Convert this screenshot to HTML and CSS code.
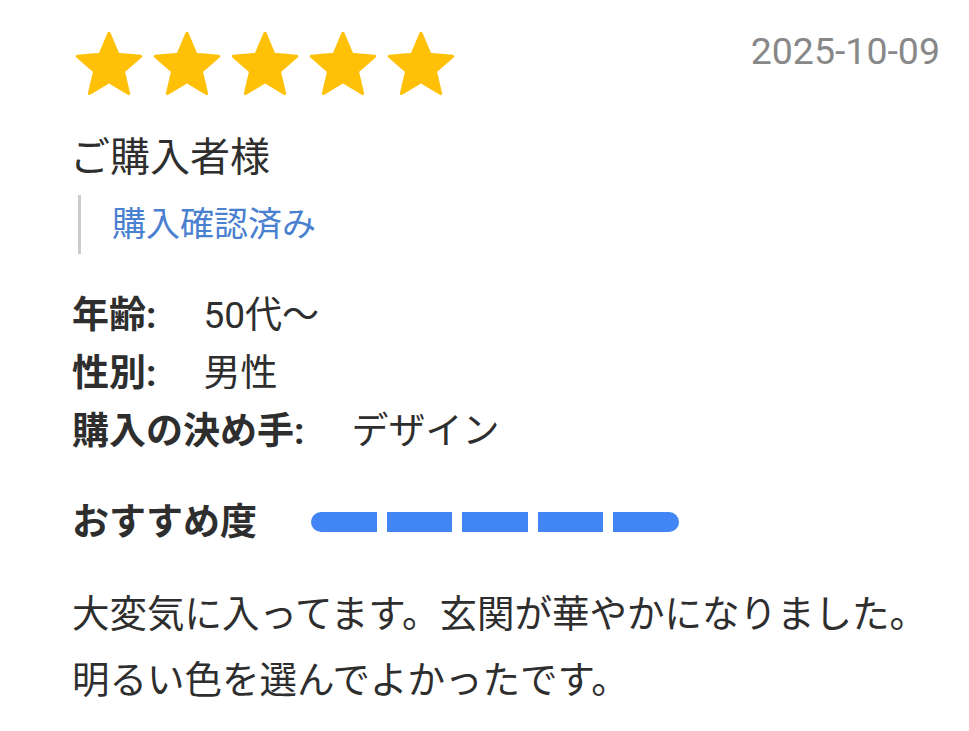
FILE: index.html
```html
<!DOCTYPE html>
<html lang="ja">
<head>
<meta charset="utf-8">
<link rel="stylesheet" href="styles.css">
</head>
<body>
<div class="review">
  <div class="header">
    <div class="stars">
      <svg class="star" viewBox="0 0 24 24"><path d="M12 17.27L18.18 21l-1.64-7.03L22 9.24l-7.19-.61L12 2 9.19 8.63 2 9.24l5.46 4.73L5.82 21z"/></svg>
      <svg class="star" viewBox="0 0 24 24"><path d="M12 17.27L18.18 21l-1.64-7.03L22 9.24l-7.19-.61L12 2 9.19 8.63 2 9.24l5.46 4.73L5.82 21z"/></svg>
      <svg class="star" viewBox="0 0 24 24"><path d="M12 17.27L18.18 21l-1.64-7.03L22 9.24l-7.19-.61L12 2 9.19 8.63 2 9.24l5.46 4.73L5.82 21z"/></svg>
      <svg class="star" viewBox="0 0 24 24"><path d="M12 17.27L18.18 21l-1.64-7.03L22 9.24l-7.19-.61L12 2 9.19 8.63 2 9.24l5.46 4.73L5.82 21z"/></svg>
      <svg class="star" viewBox="0 0 24 24"><path d="M12 17.27L18.18 21l-1.64-7.03L22 9.24l-7.19-.61L12 2 9.19 8.63 2 9.24l5.46 4.73L5.82 21z"/></svg>
    </div>
    <div class="date">2025-10-09</div>
  </div>
  <div class="name">ご購入者様</div>
  <div class="verified">購入確認済み</div>
  <div class="attrs">
    <div class="attr"><span class="label">年齢:</span><span class="value">50代〜</span></div>
    <div class="attr"><span class="label">性別:</span><span class="value">男性</span></div>
    <div class="attr"><span class="label">購入の決め手:</span><span class="value">デザイン</span></div>
  </div>
  <div class="recommend">
    <span class="rec-label">おすすめ度</span>
    <div class="bar">
      <span class="seg"></span><span class="seg"></span><span class="seg"></span><span class="seg"></span><span class="seg"></span>
    </div>
  </div>
  <p class="body">大変気に入ってます。玄関が華やかになりました。<br>明るい色を選んでよかったです。</p>
</div>
</body>
</html>
```

FILE: styles.css
```css
html, body {
  margin: 0;
  padding: 0;
  background: #fff;
}
body {
  font-family: Roboto, "Noto Sans CJK JP", sans-serif;
  color: #2e2e2e;
}
.review {
  padding: 27px 29px 0 72px;
}
.header {
  display: flex;
  justify-content: space-between;
  align-items: flex-start;
}
.stars {
  display: flex;
  gap: 2px;
  margin-left: -1px;
}
.star {
  width: 76px;
  height: 76px;
  display: block;
}
.star path {
  fill: #FFC107;
  stroke: #FFC107;
  stroke-width: 1;
  stroke-linejoin: round;
}
.date {
  font-size: 37.5px;
  line-height: 43px;
  color: #888;
  margin-top: 3px;
}
.name {
  font-size: 40px;
  line-height: 50px;
  margin-top: 30px;
  margin-left: -2px;
}
.verified {
  margin-top: 12px;
  margin-left: 6px;
  border-left: 3px solid #ccc;
  padding-left: 31px;
  font-size: 34px;
  line-height: 59px;
  color: #4a80d0;
}
.attrs {
  margin-top: 33px;
}
.attr {
  font-size: 37px;
  line-height: 58px;
}
.label {
  font-weight: bold;
  margin-right: 47px;
}
.recommend {
  margin-top: 29px;
  height: 58px;
  display: flex;
  align-items: center;
}
.rec-label {
  font-size: 37px;
  font-weight: bold;
  margin-right: 54px;
}
.bar {
  display: flex;
  gap: 10px;
  width: 368px;
  margin-top: 5px;
}
.seg {
  flex: 1;
  height: 20px;
  background: #4285F4;
}
.seg:first-child {
  border-radius: 10px 0 0 10px;
}
.seg:last-child {
  border-radius: 0 10px 10px 0;
}
.body {
  margin: 33px 0 0;
  font-size: 37.5px;
  line-height: 66px;
}
```
